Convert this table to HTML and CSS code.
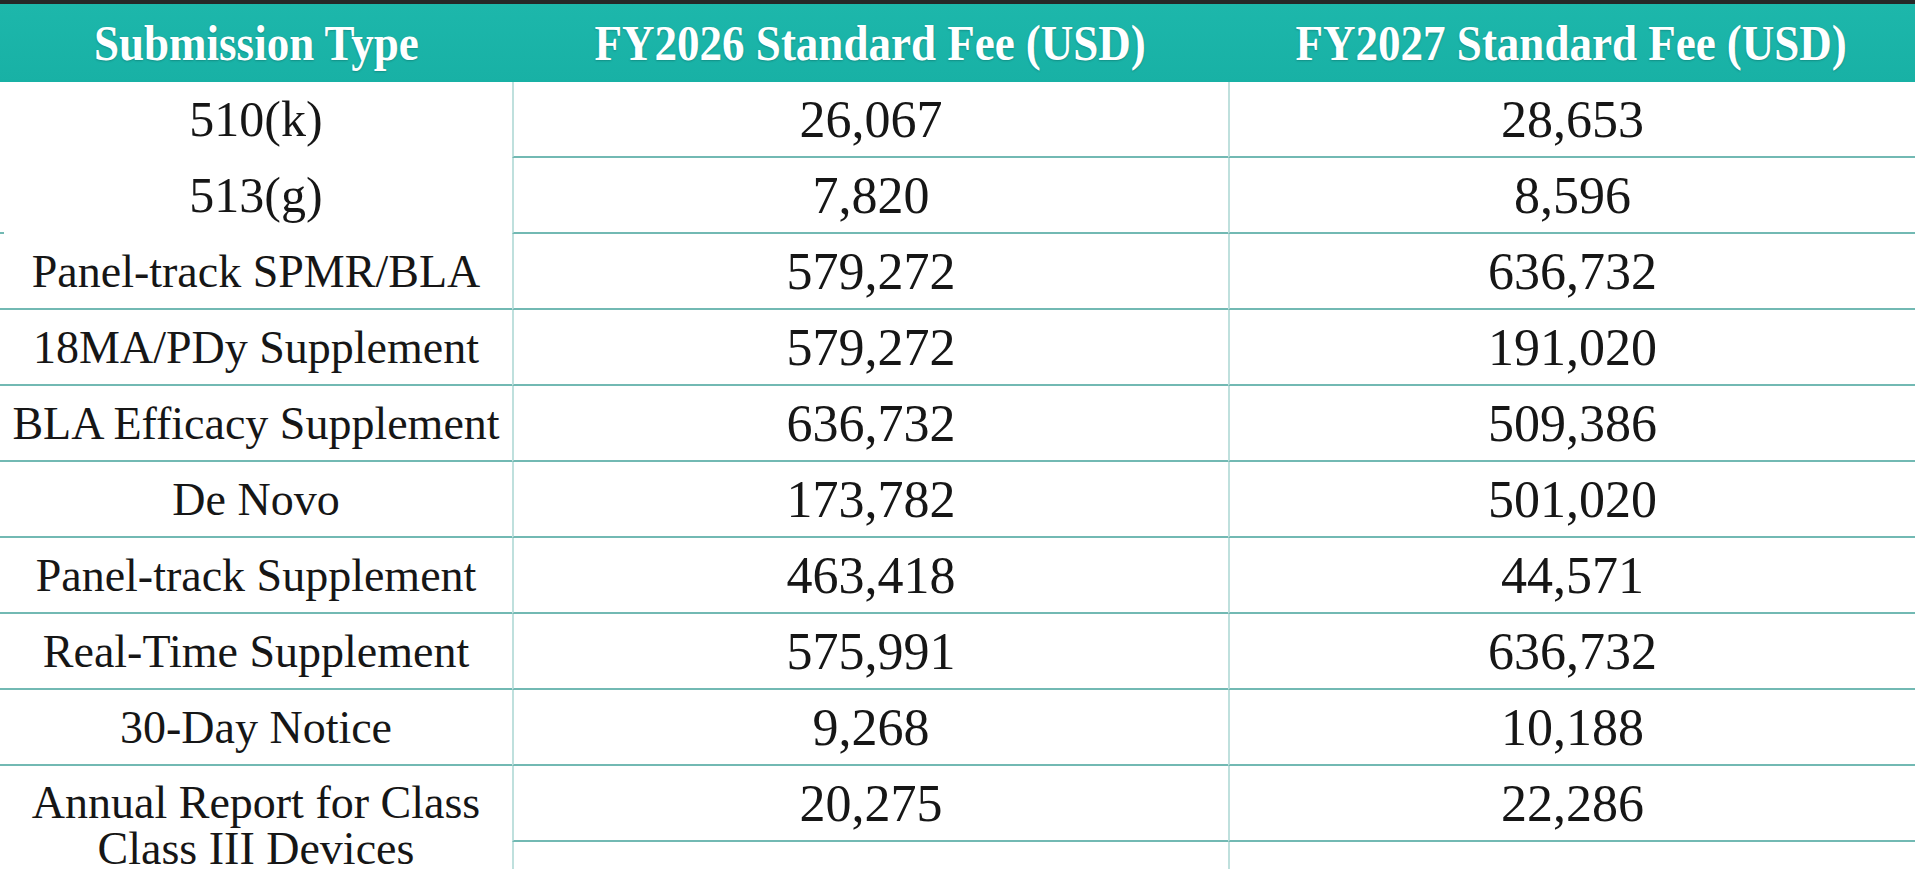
FILE: index.html
```html
<!DOCTYPE html>
<html lang="en">
<head>
<meta charset="utf-8">
<title>Submission Fees</title>
<link rel="stylesheet" href="styles.css">
</head>
<body>
<div class="topbar"></div>
<div class="fee-table">
  <div class="hcell"><span class="htext">Submission Type</span></div>
  <div class="hcell"><span class="htext">FY2026 Standard Fee (USD)</span></div>
  <div class="hcell"><span class="htext">FY2027 Standard Fee (USD)</span></div>

  <div class="cell label open"><span class="digits">510(k)</span></div>
  <div class="cell num">26,067</div>
  <div class="cell num">28,653</div>

  <div class="cell label open stub"><span class="digits">513(g)</span></div>
  <div class="cell num">7,820</div>
  <div class="cell num">8,596</div>

  <div class="cell label">Panel-track SPMR/BLA</div>
  <div class="cell num">579,272</div>
  <div class="cell num">636,732</div>

  <div class="cell label">18MA/PDy Supplement</div>
  <div class="cell num">579,272</div>
  <div class="cell num">191,020</div>

  <div class="cell label">BLA Efficacy Supplement</div>
  <div class="cell num">636,732</div>
  <div class="cell num">509,386</div>

  <div class="cell label">De Novo</div>
  <div class="cell num">173,782</div>
  <div class="cell num">501,020</div>

  <div class="cell label">Panel-track Supplement</div>
  <div class="cell num">463,418</div>
  <div class="cell num">44,571</div>

  <div class="cell label">Real-Time Supplement</div>
  <div class="cell num">575,991</div>
  <div class="cell num">636,732</div>

  <div class="cell label">30-Day Notice</div>
  <div class="cell num">9,268</div>
  <div class="cell num">10,188</div>

  <div class="cell label open multi"><span class="line">Annual Report for Class</span><span class="line">Class III Devices</span></div>
  <div class="cell num">20,275</div>
  <div class="cell num">22,286</div>

  <div class="cell label open"></div>
  <div class="cell num"></div>
  <div class="cell num"></div>
</div>
</body>
</html>
```
FILE: styles.css
```css
html, body {
  margin: 0;
  padding: 0;
  background: #ffffff;
  overflow: hidden;
}

body {
  font-family: "Liberation Serif", "Times New Roman", serif;
  color: #161616;
}

.topbar {
  height: 4px;
  background: #262828;
}

.fee-table {
  display: grid;
  grid-template-columns: 512px 716px 1fr;
}

.hcell {
  height: 78px;
  display: flex;
  align-items: center;
  justify-content: center;
  background: linear-gradient(180deg, #1db7ab 0%, #18b1a5 100%);
  color: #ffffff;
  font-weight: bold;
  font-size: 50px;
  text-shadow: 0 1px 2px rgba(0, 60, 55, 0.3);
  white-space: nowrap;
}

.htext {
  display: inline-block;
  transform: scaleX(0.9);
}

.cell {
  box-sizing: border-box;
  height: 76px;
  display: flex;
  align-items: center;
  justify-content: center;
  border-bottom: 2px solid #72b9b3;
  white-space: nowrap;
}

.label {
  font-size: 46px;
}

.digits {
  font-size: 50px;
}

.num {
  font-size: 52px;
  border-left: 2px solid #bfe0dd;
}

.open {
  border-bottom-color: transparent;
}

.stub {
  border-image: linear-gradient(90deg, #72b9b3 0, #72b9b3 4px, transparent 4px) 1;
  border-image-slice: 0 0 1 0;
}

.multi {
  flex-direction: column;
  justify-content: flex-start;
  align-items: center;
  overflow: visible;
  padding-top: 14px;
}

.line {
  display: block;
  height: 46px;
  line-height: 46px;
}
```
